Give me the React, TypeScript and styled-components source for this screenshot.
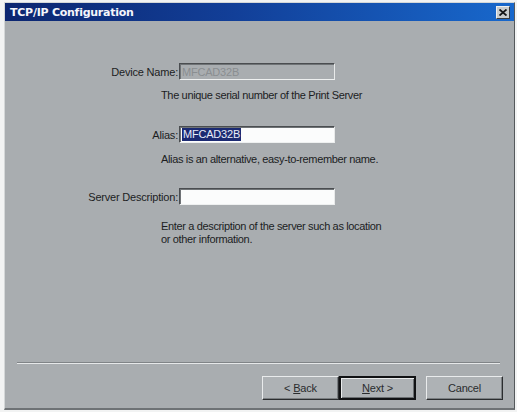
import React from 'react'
import styled, { createGlobalStyle } from 'styled-components'

const Global = createGlobalStyle`
    html, body {
        margin: 0;
        padding: 0;
        background: #f2f3f3;
        width: 517px;
        height: 412px;
        overflow: hidden;
    }
    body {
        font-family: "Liberation Sans", Arial, sans-serif;
        font-size: 11px;
        color: #1c1d1f;
    }
`

const Page = styled.div`
    padding: 2px 2px 2px 4px;
    height: 412px;
    box-sizing: border-box;
`

const Window = styled.div`
    height: 100%;
    box-sizing: border-box;
    display: flex;
    flex-direction: column;
    background: #a9adb0;
    border-left: 1px solid #d4d7d8;
    border-top: 1px solid #d4d7d8;
    border-right: 1px solid #55595c;
    border-bottom: 2px solid #6e7275;
`

const TitleBar = styled.div`
    height: 18px;
    display: flex;
    align-items: center;
    justify-content: space-between;
    padding: 0 4px 0 5px;
    background: linear-gradient(90deg, #0c2670 0%, #123f98 45%, #1868cc 100%);
`

const Title = styled.span`
    color: #f4f6fb;
    font-family: "DejaVu Sans", Verdana, sans-serif;
    font-weight: bold;
    font-size: 11px;
    letter-spacing: -0.25px;
`

const CloseButton = styled.div`
    width: 14px;
    height: 13px;
    box-sizing: border-box;
    background: #c9cccd;
    border: 1px solid;
    border-color: #eef0f0 #3a3c3e #3a3c3e #eef0f0;
    display: flex;
    align-items: center;
    justify-content: center;
`

const Body = styled.div`
    flex: 1;
    display: flex;
    flex-direction: column;
    padding: 0 10px 8px 8px;
`

const Form = styled.div`
    display: flex;
    flex-direction: column;
    padding-top: 42px;
    flex: 1;
`

const Row = styled.div<{ $top?: number }>`
    display: flex;
    align-items: center;
    height: 17px;
    margin-top: ${p => p.$top ?? 0}px;
`

const Label = styled.label`
    width: 165px;
    text-align: right;
    letter-spacing: -0.2px;
    padding-right: 1px;
    white-space: nowrap;
`

const Field = styled.div<{ $disabled?: boolean }>`
    width: 156px;
    height: 17px;
    box-sizing: border-box;
    border: 1px solid;
    border-color: #4a4d50 #e8eaea #eef0f0 #4a4d50;
    box-shadow: inset 1px 1px 0 #6f7376;
    background: ${p => (p.$disabled ? '#a9adb0' : '#fbfcfc')};
    color: ${p => (p.$disabled ? '#8a8e91' : '#1c1d1f')};
    display: flex;
    align-items: center;
    padding-left: 2px;
    letter-spacing: -0.2px;
`

const Selected = styled.span`
    background: #1b2a72;
    color: #e8ecf8;
    padding: 0 1px;
    line-height: 13px;
`

const Hint = styled.div<{ $top: number }>`
    margin-top: ${p => p.$top}px;
    padding-left: 148px;
    line-height: 13px;
    letter-spacing: -0.35px;
`

const Separator = styled.div`
    margin: 0 4px 12px 4px;
    height: 0;
    border-top: 1px solid #808487;
    border-bottom: 1px solid #e6e8e9;
`

const Buttons = styled.div`
    display: flex;
    justify-content: flex-end;
    padding-right: 1px;
`

const Button = styled.button<{ $default?: boolean; $gap?: number }>`
    width: 77px;
    height: 24px;
    box-sizing: border-box;
    margin-left: ${p => p.$gap ?? 0}px;
    font-family: "Liberation Sans", Arial, sans-serif;
    font-size: 11px;
    letter-spacing: -0.2px;
    color: #2a2c2e;
    background: #aeb2b5;
    border: ${p => (p.$default ? 2 : 1)}px solid;
    border-color: ${p => (p.$default ? '#111214' : '#e9ebec #2b2d2f #2b2d2f #e9ebec')};
    box-shadow: ${p => (p.$default ? 'inset 1px 1px 0 #e9ebec, inset -1px -1px 0 #6b6f72' : 'inset -1px -1px 0 #7b7f82')};
    padding: 0;

    u {
        text-decoration: underline;
    }
`

export default function App() {
    return (
        <Page>
            <Global />
            <Window>
                <TitleBar>
                    <Title>TCP/IP Configuration</Title>
                    <CloseButton>
                        <svg width="8" height="7" viewBox="0 0 8 7">
                            <path d="M0.5 0.5 L7.5 6.5 M7.5 0.5 L0.5 6.5" stroke="#141516" strokeWidth="1.8" />
                        </svg>
                    </CloseButton>
                </TitleBar>
                <Body>
                    <Form>
                        <Row>
                            <Label>Device Name:</Label>
                            <Field $disabled>MFCAD32B</Field>
                        </Row>
                        <Hint $top={9}>The unique serial number of the Print Server</Hint>

                        <Row $top={24}>
                            <Label>Alias:</Label>
                            <Field>
                                <Selected>MFCAD32B</Selected>
                            </Field>
                        </Row>
                        <Hint $top={10}>Alias is an alternative, easy-to-remember name.</Hint>

                        <Row $top={22}>
                            <Label>Server Description:</Label>
                            <Field />
                        </Row>
                        <Hint $top={15}>
                            Enter a description of the server such as location
                            <br />
                            or other information.
                        </Hint>
                    </Form>
                    <Separator />
                    <Buttons>
                        <Button>&lt; <u>B</u>ack</Button>
                        <Button $default>
                            <u>N</u>ext &gt;
                        </Button>
                        <Button $gap={10}>Cancel</Button>
                    </Buttons>
                </Body>
            </Window>
        </Page>
    )
}
